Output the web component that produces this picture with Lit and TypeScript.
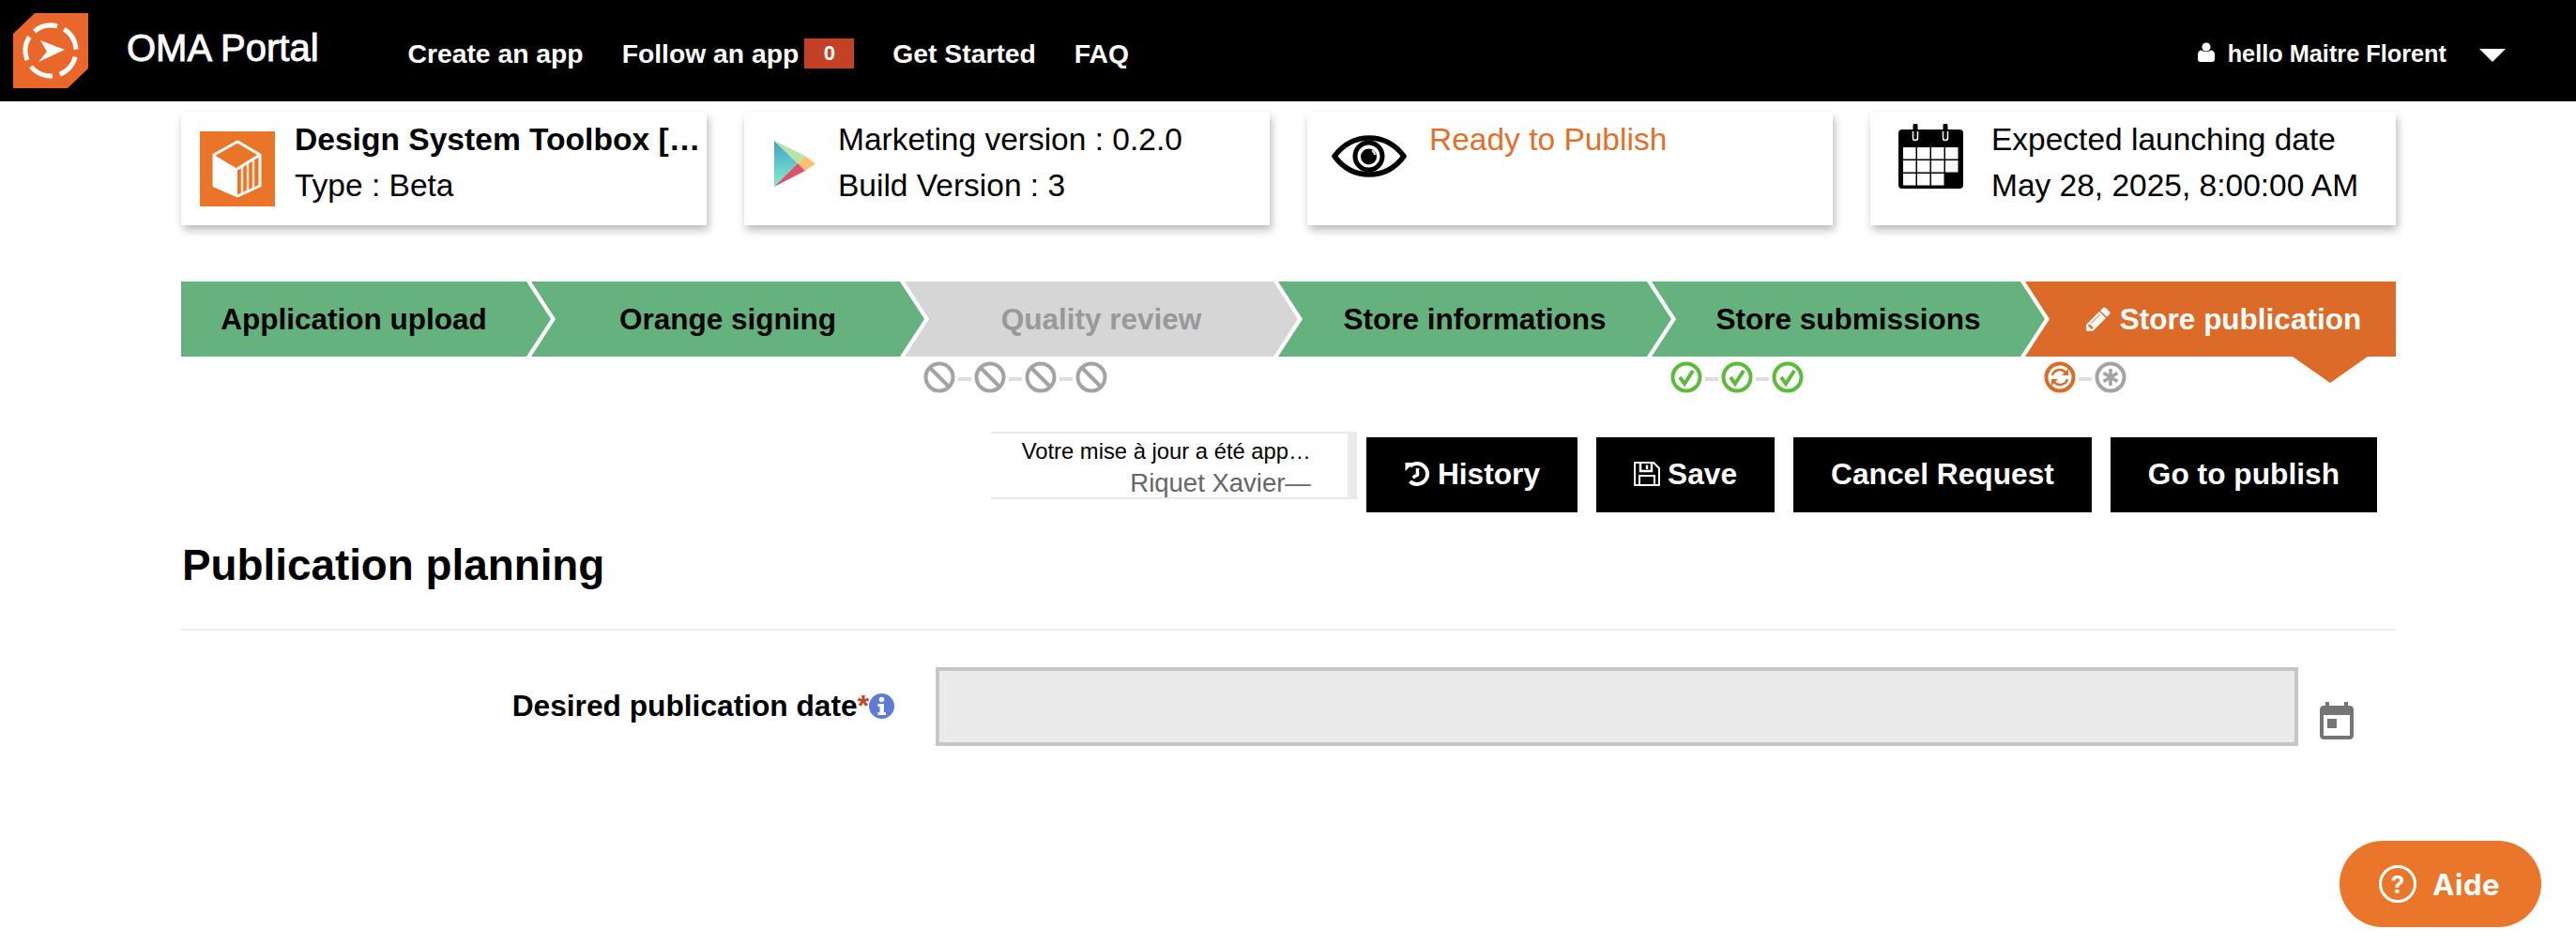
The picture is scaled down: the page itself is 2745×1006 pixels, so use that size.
import { LitElement, html, css, svg } from "lit";
import { customElement } from "lit/decorators.js";

const logo = html`<svg class="logo" viewBox="0 0 80 80">
  <polygon points="23,0 80,0 80,59 58,80 0,80 0,22" fill="#ea672b"></polygon>
  <circle cx="40" cy="40" r="27" fill="none" stroke="#fff" stroke-width="5" pathLength="360"
    stroke-dasharray="55 17" transform="rotate(-58 40 40)"></circle>
  <polygon points="29,29 55,39 27,52 36,41" fill="#fff"></polygon>
</svg>`;

const userIcon = html`<svg class="user" viewBox="0 0 18 21" fill="#fff">
  <circle cx="9" cy="5" r="4.6"></circle>
  <path d="M0 13c0-3 2-4.500 4-4.500 1.300 1 3 1.500 5 1.500s3.700-.5 5-1.500c2 0 4 1.500 4 4.500v5c0 2-1 3-3 3H3c-2 0-3-1-3-3z"></path>
</svg>`;

const cubeIcon = html`<svg class="app-icon" viewBox="0 0 80 80">
  <rect width="80" height="80" fill="#ea7428"></rect>
  <polygon points="40,11 64,25 64,58 40,69 15,58 15,25" fill="none" stroke="#fff" stroke-width="3" stroke-linejoin="round"></polygon>
  <polygon points="15,25 40,40 40,69 15,58" fill="#fff"></polygon>
  <path d="M40 40 64 25" stroke="#fff" stroke-width="3"></path>
  <path d="M45 38v28M51 34v29M57 31v29" stroke="#fbe3d0" stroke-width="2.500"></path>
</svg>`;

const playIcon = html`<svg class="play-icon" viewBox="0 0 44 49">
  <defs>
    <linearGradient id="pl" x1="0" y1="0" x2="0" y2="1">
      <stop offset="0" stop-color="#45a0c8"></stop>
      <stop offset="1" stop-color="#7ff0cc"></stop>
    </linearGradient>
  </defs>
  <polygon points="0,0 0,49 25,24" fill="url(#pl)"></polygon>
  <polygon points="0,0 25,24 33,16" fill="#b6e4a6"></polygon>
  <polygon points="33,16 44,24.500 33,32 25,24" fill="#fbc076"></polygon>
  <polygon points="0,49 25,24 33,32" fill="#d8546c"></polygon>
</svg>`;

const eyeIcon = html`<svg class="eye-icon" viewBox="0 0 80 45">
  <path d="M3 22.500C13 9 26 3 40 3s27 6 37 19.500C67 36 54 42 40 42S13 36 3 22.500z" fill="#fff" stroke="#000" stroke-width="5.500" stroke-linejoin="round"></path>
  <circle cx="39.500" cy="22.500" r="14.500" fill="#fff" stroke="#000" stroke-width="5"></circle>
  <circle cx="39.500" cy="23" r="8.500" fill="#000"></circle>
  <path d="M43 16.500a6 6 0 0 1 3 4.500" fill="none" stroke="#fff" stroke-width="2"></path>
</svg>`;

const calendarCells = [0, 1, 2].flatMap((r) =>
  [0, 1, 2, 3].filter((c) => !(r === 2 && c === 3)).map((c) => [5 + c * 15, 25 + r * 14])
);

const calendarIcon = html`<svg class="cal-icon" viewBox="0 0 69 69">
  <rect x="0" y="6" width="69" height="63" rx="4" fill="#000"></rect>
  <path d="M18 2v12M50 2v12" stroke="#000" stroke-width="5" stroke-linecap="round"></path>
  <path d="M15.500 8v7a2.500 2.500 0 0 0 5 0V8M47.500 8v7a2.500 2.500 0 0 0 5 0V8" fill="none" stroke="#fff" stroke-width="1.500"></path>
  ${calendarCells.map(([x, y]) => svg`<rect x=${x} y=${y} width="13.500" height="12.500" fill="#fff"></rect>`)}
</svg>`;

const pencilIcon = html`<svg class="btn-icon" viewBox="0 0 1792 1792" fill="#fff">
  <path d="M491 1536l91-91-235-235-91 91v107h128v128h107zm523-928q0-22-22-22-10 0-17 7l-542 542q-7 7-7 17 0 22 22 22 10 0 17-7l542-542q7-7 7-17zm-54-192l416 416-832 832H128v-416zm683 96q0 53-37 90l-166 166-416-416 166-165q36-38 90-38 53 0 91 38l235 234q37 39 37 91z"></path>
</svg>`;

const historyIcon = html`<svg class="btn-icon" viewBox="0 0 27 26">
  <path d="M6 5a11 11 0 1 1 0 16" fill="none" stroke="#fff" stroke-width="4"></path>
  <polygon points="1,1 10,1 1,10" fill="#fff"></polygon>
  <path d="M14 7v7l-5 3" fill="none" stroke="#fff" stroke-width="3.500"></path>
</svg>`;

const saveIcon = html`<svg class="btn-icon" viewBox="0 0 28 26" fill="none" stroke="#fff" stroke-width="2">
  <path d="M1 1h20l6 6v18H1z" stroke-linejoin="round"></path>
  <path d="M7 1v9h12V1M14 3.500v4.500" stroke-width="2.500"></path>
  <path d="M6 25V15h16v10"></path>
</svg>`;

const infoIcon = html`<svg class="info" viewBox="0 0 27 27">
  <circle cx="13.500" cy="13.500" r="13.500" fill="#5a7cd4"></circle>
  <circle cx="13.500" cy="6.500" r="2.800" fill="#fff"></circle>
  <path d="M9.500 11h6.500v9h2v3H9.500v-3h2v-6h-2z" fill="#fff"></path>
</svg>`;

const todayIcon = html`<svg class="today" viewBox="0 0 24 24" fill="#757575">
  <path d="M19 3h-1V1h-2v2H8V1H6v2H5c-1.110 0-1.990.9-1.990 2L3 19c0 1.100.89 2 2 2h14c1.100 0 2-.9 2-2V5c0-1.100-.9-2-2-2zm0 16H5V8h14v11zM7 10h5v5H7z"></path>
</svg>`;

// small round status marks under the steps
const marks: Record<string, unknown> = {
  ban: svg`<circle cx="17" cy="17" r="14.500" fill="none" stroke="#a3a3a3" stroke-width="4"></circle>
    <path d="M7 7l20 20" stroke="#a3a3a3" stroke-width="4"></path>`,
  check: svg`<circle cx="17" cy="17" r="14.500" fill="none" stroke="#5dbb3c" stroke-width="4"></circle>
    <path d="M10 17l5 7 9-14" fill="none" stroke="#5dbb3c" stroke-width="4"></path>`,
  sync: svg`<circle cx="17" cy="17" r="14.500" fill="none" stroke="#dc6a28" stroke-width="4"></circle>
    <path d="M9 15a8 8 0 0 1 14-3M25 19a8 8 0 0 1-14 3" fill="none" stroke="#dc6a28" stroke-width="2.500"></path>
    <path d="M26 8v7h-7zM8 26v-7h7z" fill="#dc6a28"></path>`,
  star: svg`<circle cx="17" cy="17" r="14.500" fill="none" stroke="#a3a3a3" stroke-width="4"></circle>
    <path d="M17 8v18M9.500 12.500l15 9M24.500 12.500l-15 9" stroke="#a3a3a3" stroke-width="3.500"></path>`,
};

const steps = [
  { label: "Application upload", state: "done", marks: [] as string[] },
  { label: "Orange signing", state: "done", marks: [] },
  { label: "Quality review", state: "off", marks: ["ban", "ban", "ban", "ban"] },
  { label: "Store informations", state: "done", marks: [] },
  { label: "Store submissions", state: "done", marks: ["check", "check", "check"] },
  { label: "Store publication", state: "current", marks: ["sync", "star"] },
];

@customElement("app-root")
export class AppRoot extends LitElement {
  static styles = css`
    :host {
      display: block;
      min-height: 1006px;
      background: #fff;
      color: #000;
      font-family: "Liberation Sans", Arial, sans-serif;
    }
    .topbar {
      display: flex;
      align-items: center;
      height: 108px;
      background: #000;
      color: #fff;
      padding: 0 75px 0 14px;
    }
    .logo {
      width: 80px;
      height: 80px;
      flex: none;
    }
    .brand {
      margin: -6px 0 0 41px;
      font-size: 40px;
      -webkit-text-stroke: 0.9px #fff;
    }
    .nav {
      display: flex;
      align-items: center;
      gap: 41px;
      margin: 6px 0 0 95px;
      font-size: 28.300px;
      font-weight: 700;
    }
    .nav span.item {
      display: flex;
      align-items: center;
    }
    .badge {
      display: inline-block;
      width: 53px;
      height: 32px;
      line-height: 32px;
      margin-left: 6px;
      background: #c44125;
      font-size: 22px;
      text-align: center;
    }
    .account {
      display: flex;
      align-items: center;
      margin: 6px 0 0 auto;
      font-size: 25.300px;
      font-weight: 700;
    }
    .user {
      width: 18px;
      height: 21px;
      margin: -4px 14px 0 0;
    }
    .caret {
      width: 0;
      height: 0;
      margin: 4px 0 0 35px;
      border-left: 14px solid transparent;
      border-right: 14px solid transparent;
      border-top: 14px solid #fff;
    }

    .page {
      padding: 12px 192px 0 193px;
    }
    .cards {
      display: grid;
      grid-template-columns: repeat(4, 1fr);
      gap: 40px;
    }
    .card {
      display: flex;
      height: 120px;
      box-sizing: border-box;
      padding-top: 4px;
      background: #fff;
      box-shadow: 2px 5px 9px rgba(0, 0, 0, 0.28);
      font-size: 33.500px;
      line-height: 49px;
      white-space: nowrap;
    }
    .card b {
      font-size: 33.600px;
    }
    .card .ready {
      color: #e0702a;
    }
    .app-icon {
      width: 80px;
      height: 80px;
      margin: 16px 21px 0 20px;
      flex: none;
    }
    .play-icon {
      width: 44px;
      height: 49px;
      margin: 26px 24px 0 32px;
      flex: none;
    }
    .eye-icon {
      width: 80px;
      height: 45px;
      margin: 20px 24px 0 26px;
      flex: none;
    }
    .cal-icon {
      width: 69px;
      height: 69px;
      margin: 8px 30px 0 30px;
      flex: none;
    }

    .steps {
      display: flex;
      margin-top: 60px;
    }
    .step {
      position: relative;
      flex: none;
      width: 419px;
      margin-left: -21px;
    }
    .step:first-child {
      width: 394px;
      margin-left: 0;
    }
    .step:last-child {
      width: 395px;
    }
    .chevron {
      display: flex;
      align-items: center;
      justify-content: center;
      gap: 8px;
      height: 80px;
      font-size: 31.500px;
      font-weight: 700;
      clip-path: polygon(0 0, calc(100% - 26px) 0, 100% 50%, calc(100% - 26px) 100%, 0 100%, 26px 50%);
    }
    .step:first-child .chevron {
      padding-right: 26px;
      clip-path: polygon(0 0, calc(100% - 26px) 0, 100% 50%, calc(100% - 26px) 100%, 0 100%);
    }
    .step:last-child .chevron {
      padding-left: 26px;
      clip-path: polygon(0 0, 100% 0, 100% 100%, 0 100%, 26px 50%);
    }
    .done .chevron {
      background: #66b27f;
    }
    .off .chevron {
      background: #d6d6d6;
      color: #999;
    }
    .current .chevron {
      background: #dc6a28;
      color: #fff;
    }
    .current::after {
      content: "";
      position: absolute;
      top: 80px;
      right: 30px;
      border-left: 40px solid transparent;
      border-right: 40px solid transparent;
      border-top: 28px solid #dc6a28;
    }
    .chevron .btn-icon {
      width: 30px;
      height: 30px;
    }
    .marks {
      display: flex;
      align-items: center;
      height: 34px;
      margin-top: 5px;
      padding-left: 20px;
    }
    .marks svg {
      width: 34px;
      height: 34px;
      flex: none;
    }
    .link {
      width: 14px;
      height: 4px;
      margin: 4px 3px 0;
      background: #ddd;
    }

    .actions {
      display: flex;
      justify-content: flex-end;
      align-items: flex-start;
      gap: 20px;
      margin-top: 41px;
      padding-right: 20px;
    }
    .comment {
      width: 390px;
      height: 72px;
      box-sizing: border-box;
      margin-right: -10px;
      padding-right: 39px;
      border: 2px solid #eaeaea;
      border-width: 2px 10px 2px 0;
      text-align: right;
      white-space: nowrap;
    }
    .comment .msg {
      font-size: 23.800px;
      line-height: 32px;
      margin-top: 3px;
    }
    .comment .who {
      color: #666;
      font-size: 27.500px;
      line-height: 34px;
      margin-top: 1px;
    }
    .btn {
      display: flex;
      align-items: center;
      gap: 8px;
      height: 80px;
      box-sizing: border-box;
      margin-top: 6px;
      padding: 0 40px 2px;
      background: #000;
      color: #fff;
      font-size: 31.700px;
      font-weight: 700;
      white-space: nowrap;
    }
    .btn .btn-icon {
      width: 28px;
      height: 26px;
    }

    h1 {
      margin: 29px 0 0;
      padding: 0 0 40px 1px;
      font-size: 45.800px;
      line-height: 55px;
      border-bottom: 2px solid #eee;
    }
    .field-row {
      display: flex;
      margin-top: 39px;
    }
    .field-label {
      display: flex;
      align-items: center;
      justify-content: flex-end;
      width: 760px;
      margin-right: 44px;
      padding-bottom: 2px;
      font-size: 31.700px;
      font-weight: 700;
    }
    .req {
      color: #c0432a;
    }
    .info {
      width: 27px;
      height: 27px;
    }
    .field {
      width: 1452px;
      height: 84px;
      box-sizing: border-box;
      background: #eaeaea;
      border: 4px solid #c6c6c6;
    }
    .today {
      width: 48px;
      height: 48px;
      margin: 35px 0 0 17px;
    }

    .help {
      position: fixed;
      right: 37px;
      bottom: 18px;
      display: flex;
      align-items: center;
      gap: 17px;
      height: 92px;
      box-sizing: border-box;
      padding: 0 44px 0 42px;
      border-radius: 46px;
      background: #e9762b;
      color: #fff;
      font-family: Inter, sans-serif;
      font-size: 31px;
      font-weight: 700;
      letter-spacing: 0.5px;
    }
    .help .q {
      display: flex;
      align-items: center;
      justify-content: center;
      width: 40px;
      height: 40px;
      box-sizing: border-box;
      border: 3.500px solid #fff;
      border-radius: 50%;
      font-size: 26px;
    }
  `;

  private renderStep(s: (typeof steps)[number]) {
    return html`<div class="step ${s.state}">
      <div class="chevron">${s.state === "current" ? pencilIcon : ""}${s.label}</div>
      <div class="marks">
        ${s.marks.map(
          (m, i) => html`${i > 0 ? html`<span class="link"></span>` : ""}<svg viewBox="0 0 34 34">${marks[m]}</svg>`
        )}
      </div>
    </div>`;
  }

  render() {
    return html`
      <header class="topbar">
        ${logo}
        <div class="brand">OMA Portal</div>
        <nav class="nav">
          <span class="item">Create an app</span>
          <span class="item">Follow an app<span class="badge">0</span></span>
          <span class="item">Get Started</span>
          <span class="item">FAQ</span>
        </nav>
        <div class="account">${userIcon}hello Maitre Florent<span class="caret"></span></div>
      </header>

      <main class="page">
        <section class="cards">
          <div class="card">${cubeIcon}<div><b>Design System Toolbox […</b><br />Type : Beta</div></div>
          <div class="card">${playIcon}<div>Marketing version : 0.2.0<br />Build Version : 3</div></div>
          <div class="card">${eyeIcon}<div class="ready">Ready to Publish</div></div>
          <div class="card">${calendarIcon}<div>Expected launching date<br />May 28, 2025, 8:00:00 AM</div></div>
        </section>

        <section class="steps">${steps.map((s) => this.renderStep(s))}</section>

        <section class="actions">
          <div class="comment">
            <div class="msg">Votre mise à jour a été app…</div>
            <div class="who">Riquet Xavier—</div>
          </div>
          <div class="btn">${historyIcon}History</div>
          <div class="btn">${saveIcon}Save</div>
          <div class="btn">Cancel Request</div>
          <div class="btn">Go to publish</div>
        </section>

        <h1>Publication planning</h1>

        <section class="field-row">
          <label class="field-label">Desired publication date<span class="req">*</span>${infoIcon}</label>
          <div class="field"></div>
          ${todayIcon}
        </section>
      </main>

      <div class="help"><span class="q">?</span>Aide</div>
    `;
  }
}
